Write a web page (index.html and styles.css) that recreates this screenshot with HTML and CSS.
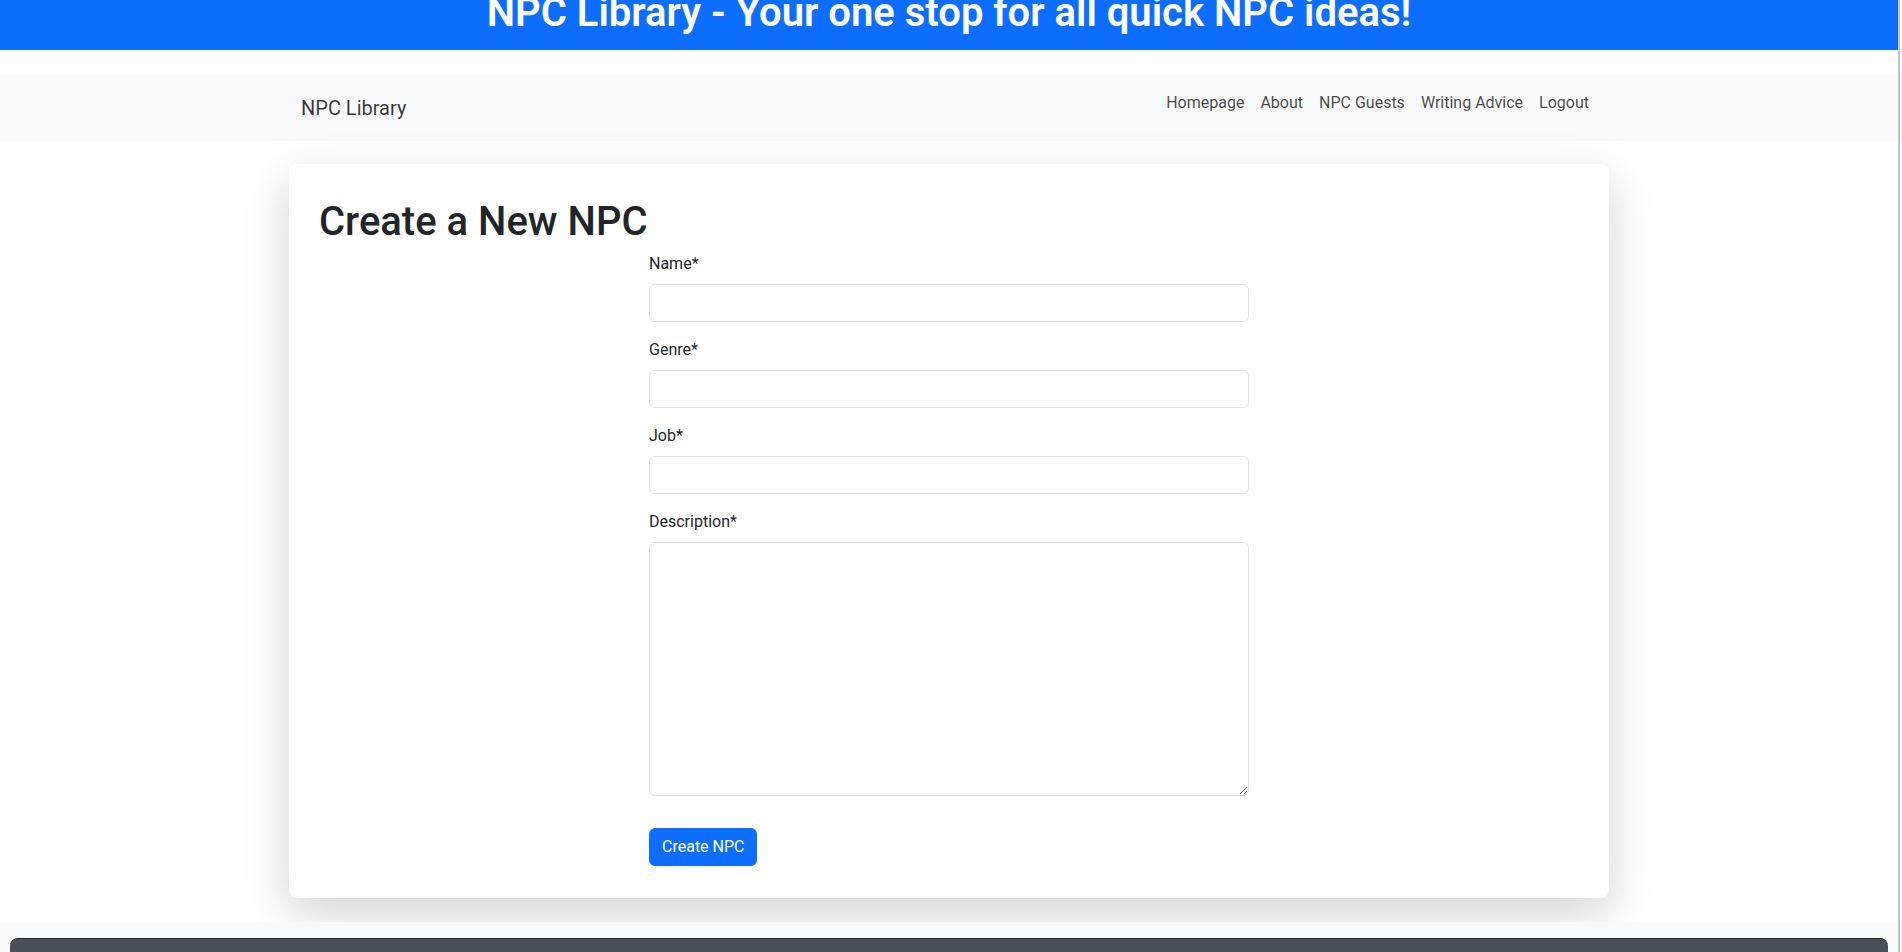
FILE: index.html
```html
<!DOCTYPE html>
<html lang="en">
<head>
<meta charset="utf-8">
<title>NPC Library</title>
<link rel="stylesheet" href="styles.css">
</head>
<body>
<div class="banner">
  <h1 class="banner-title">NPC Library - Your one stop for all quick NPC ideas!</h1>
</div>

<nav class="navbar">
  <div class="nav-container">
    <a class="brand" href="#">NPC Library</a>
    <ul class="nav-links">
      <li><a class="nav-link" href="#">Homepage</a></li>
      <li><a class="nav-link" href="#">About</a></li>
      <li><a class="nav-link" href="#">NPC Guests</a></li>
      <li><a class="nav-link" href="#">Writing Advice</a></li>
      <li><a class="nav-link" href="#">Logout</a></li>
    </ul>
  </div>
</nav>

<main class="card">
  <h1 class="card-title">Create a New NPC</h1>
  <form class="npc-form">
    <div class="field">
      <label class="form-label" for="name">Name*</label>
      <input class="form-control" id="name" type="text">
    </div>
    <div class="field">
      <label class="form-label" for="genre">Genre*</label>
      <input class="form-control" id="genre" type="text">
    </div>
    <div class="field">
      <label class="form-label" for="job">Job*</label>
      <input class="form-control" id="job" type="text">
    </div>
    <div class="field">
      <label class="form-label" for="desc">Description*</label>
      <textarea class="form-control textarea" id="desc" rows="10"></textarea>
    </div>
    <div class="actions">
      <button class="btn-primary" type="submit">Create NPC</button>
    </div>
  </form>
</main>

<footer class="footer-wrap">
  <div class="footer"></div>
</footer>
</body>
</html>
```

FILE: styles.css
```css
* {
  box-sizing: border-box;
}

html, body {
  margin: 0;
  padding: 0;
}

html {
  background: #ffffff;
}

body {
  margin-right: 2px;
  border-right: 2px solid #c4c4c4;
  font-family: "Segoe UI", Roboto, "Liberation Sans", Arial, sans-serif;
  font-size: 16px;
  line-height: 1.5;
  color: #212529;
  background: #ffffff;
}

.banner {
  height: 50px;
  background: #0d6efd;
  overflow: hidden;
}

.banner-title {
  margin: 0;
  color: #ffffff;
  text-align: center;
  font-size: 40px;
  font-weight: 600;
  line-height: 26px;
}

.navbar {
  margin-top: 24px;
  background: #f8f9fa;
  height: 67px;
}

.nav-container {
  max-width: 1320px;
  height: 100%;
  margin: 0 auto;
  padding: 0 12px;
  display: flex;
  align-items: center;
  justify-content: space-between;
}

.brand {
  font-size: 20px;
  line-height: 30px;
  color: rgba(0, 0, 0, 0.78);
  text-decoration: none;
}

.nav-links {
  list-style: none;
  display: flex;
  margin: 0 0 10px 0;
  padding: 0;
}

.nav-link {
  display: block;
  padding: 8px 8px;
  line-height: 24px;
  color: rgba(0, 0, 0, 0.72);
  text-decoration: none;
}

.card {
  display: block;
  max-width: 1320px;
  margin: 23px auto 24px auto;
  padding: 34px 30px 32px 30px;
  background: #ffffff;
  border-radius: 8px;
  box-shadow: 0 16px 48px rgba(0, 0, 0, 0.175);
}

.card-title {
  margin: 0 0 6px 0;
  font-size: 40px;
  font-weight: 500;
  line-height: 48px;
}

.npc-form {
  width: 600px;
  margin: 0 auto;
}

.field {
  margin-bottom: 16px;
}

.form-label {
  display: inline-block;
  margin-bottom: 8px;
  line-height: 24px;
}

.form-control {
  display: block;
  width: 100%;
  height: 38px;
  padding: 6px 12px;
  font-family: inherit;
  font-size: 16px;
  line-height: 24px;
  color: #212529;
  background: #ffffff;
  border: 1px solid #dee2e6;
  border-radius: 6px;
}

.textarea {
  height: 254px;
  resize: vertical;
}

.actions {
  padding-top: 16px;
}

.btn-primary {
  display: inline-block;
  height: 38px;
  padding: 6px 12px;
  font-family: inherit;
  font-size: 16px;
  line-height: 24px;
  color: #ffffff;
  background: #0d6efd;
  border: 1px solid #0d6efd;
  border-radius: 6px;
}

.footer-wrap {
  background: #f8f9fa;
  padding: 16px 10px 0 10px;
}

.footer {
  height: 120px;
  background: #495057;
  border-top: 1px solid #212529;
  border-radius: 8px 8px 0 0;
}
```
